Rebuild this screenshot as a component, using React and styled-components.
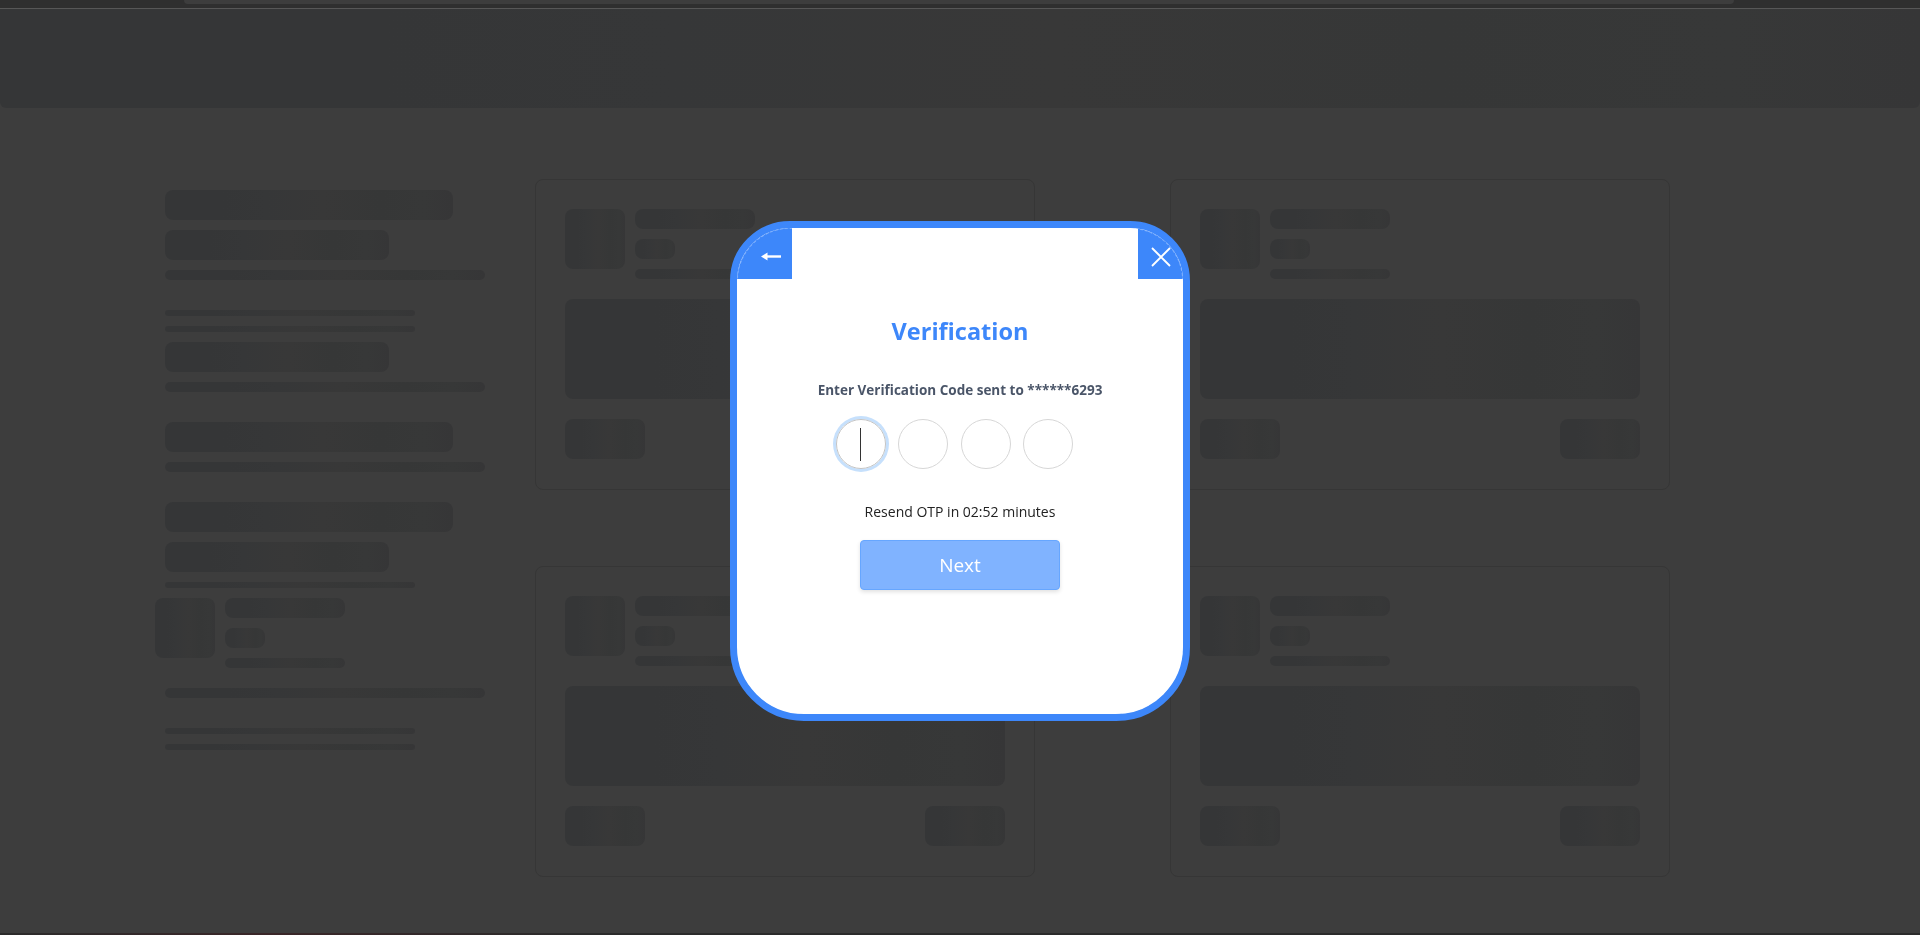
import styled, { createGlobalStyle, css } from "styled-components";

const GlobalStyle = createGlobalStyle`
  * {
    box-sizing: border-box;
  }
  html,
  body {
    margin: 0;
    padding: 0;
    background: #3d3d3d;
    overflow: hidden;
  }
  body {
    font-family: "Open Sans", "Noto Sans", sans-serif;
  }
`;

const shimmer = css`
  background: linear-gradient(
    90deg,
    #353637 0%,
    #353637 20%,
    #363738 35%,
    #383838 55%,
    #363737 75%,
    #373838 90%,
    #363637 100%
  );
`;

const Page = styled.div`
  height: 100vh;
  display: flex;
  flex-direction: column;
  background: #3d3d3d;
`;

const TopStrip = styled.div`
  height: 8px;
  background: #2f2f2f;
  padding: 0 186px 0 184px;
  border-bottom: 1px solid #575757;
  box-sizing: content-box;
`;

const Tab = styled.div`
  height: 4px;
  background: #3d3d3d;
  border-radius: 0 0 5px 5px;
`;

const Header = styled.div`
  height: 99px;
  border-radius: 0 0 6px 6px;
  ${shimmer};
`;

const Main = styled.div`
  flex: 1;
  display: flex;
  align-items: flex-start;
  padding: 71px 0 0 165px;
`;

const LeftColumn = styled.div`
  width: 320px;
  margin-right: 50px;
  padding-top: 11px;
  display: flex;
  flex-direction: column;
  gap: 10px;
`;

const Bar = styled.div`
  width: ${(p) => p.$w}px;
  height: ${(p) => p.$h}px;
  margin-top: ${(p) => p.$mt || 0}px;
  border-radius: ${(p) => (p.$h >= 20 ? 8 : p.$h >= 10 ? 5 : 3)}px;
  flex-shrink: 0;
  ${shimmer};
`;

const MediaRow = styled.div`
  display: flex;
  align-items: flex-start;
  gap: 10px;
  margin-left: ${(p) => p.$ml || 0}px;
`;

const Thumb = styled.div`
  width: 60px;
  height: 60px;
  border-radius: 8px;
  flex-shrink: 0;
  ${shimmer};
`;

const MediaLines = styled.div`
  display: flex;
  flex-direction: column;
  gap: 10px;
`;

const CardGrid = styled.div`
  display: grid;
  grid-template-columns: 500px 500px;
  column-gap: 135px;
  row-gap: 76px;
`;

const Card = styled.div`
  height: 311px;
  border: 1px solid #363636;
  border-radius: 8px;
  padding: 29px;
  display: flex;
  flex-direction: column;
`;

const Banner = styled.div`
  height: 100px;
  margin-top: 20px;
  border-radius: 8px;
  ${shimmer};
`;

const CardFooter = styled.div`
  display: flex;
  justify-content: space-between;
  margin-top: 20px;
`;

const Pill = styled.div`
  width: 80px;
  height: 40px;
  border-radius: 8px;
  ${shimmer};
`;

const BottomLine = styled.div`
  height: 2px;
  background: linear-gradient(90deg, #2b2b2b 0%, #3a2628 14%, #2b2b2b 30%, #2b2b2b 100%);
`;

/* ---------- modal ---------- */

const Overlay = styled.div`
  position: fixed;
  inset: 0;
  display: flex;
  align-items: center;
  justify-content: center;
  padding-top: 7px;
`;

const Modal = styled.div`
  position: relative;
  width: 460px;
  height: 500px;
  background: #ffffff;
  border: 7px solid #3d87fa;
  border-radius: 60px 60px 74px 74px;
  overflow: hidden;
  display: flex;
  flex-direction: column;

  &::after {
    content: "";
    position: absolute;
    inset: 0;
    border-radius: 53px 53px 67px 67px;
    border: 1px dashed rgba(255, 255, 255, 0.3);
    pointer-events: none;
  }
`;

const HeaderBar = styled.div`
  display: flex;
  justify-content: space-between;
  height: 51px;
`;

const CornerButton = styled.button`
  width: ${(p) => p.$w}px;
  height: 51px;
  border: 0;
  margin: 0;
  background: #3d87fa;
  padding: ${(p) => p.$pt}px 0 0 ${(p) => p.$pl}px;
  display: flex;
  align-items: flex-start;
  justify-content: flex-start;
  cursor: pointer;
`;

const Body = styled.div`
  display: flex;
  flex-direction: column;
  align-items: center;
`;

const Title = styled.h2`
  margin: 37px 0 0;
  font-size: 23.5px;
  line-height: 30px;
  font-weight: 700;
  color: #3d87fa;
`;

const Subtitle = styled.p`
  margin: 34px 0 0;
  font-size: 13.5px;
  line-height: 20px;
  font-weight: 700;
  color: #4a5568;
`;

const OtpRow = styled.div`
  display: flex;
  margin-top: 19px;
  padding-left: 1px;
`;

const OtpCircle = styled.div`
  width: 50px;
  height: 50px;
  margin-right: 12.5px;
  border-radius: 50%;
  border: 1px solid ${(p) => (p.$active ? "#c4c4c4" : "#d7d7d7")};
  box-shadow: ${(p) => (p.$active ? "0 0 0 3px #c6e0fc" : "none")};
  display: flex;
  align-items: center;
  justify-content: center;
`;

const Caret = styled.span`
  width: 1px;
  height: 33px;
  background: #333333;
`;

const Resend = styled.p`
  margin: 33px 0 0;
  font-size: 14px;
  line-height: 20px;
  color: #222222;
`;

const NextButton = styled.button`
  margin-top: 18px;
  width: 200px;
  height: 50px;
  border-radius: 4px;
  border: 1px solid #66a6ff;
  background: #80b3ff;
  color: #ffffff;
  font-family: "Open Sans", "Noto Sans", sans-serif;
  font-size: 19px;
  box-shadow: 0 2px 4px rgba(0, 0, 0, 0.12);
  cursor: pointer;
`;

function BackArrow() {
  return (
    <svg width="20" height="9" viewBox="0 0 20 9">
      <polygon points="0,4.5 6.5,0.5 6.5,8.5" fill="#fff" />
      <rect x="5" y="3.3" width="15" height="2.4" fill="#fff" />
    </svg>
  );
}

function CloseIcon() {
  return (
    <svg width="20" height="20" viewBox="0 0 20 20">
      <path d="M1 1 L19 19 M19 1 L1 19" stroke="#fff" strokeWidth="1.8" />
    </svg>
  );
}

function SkeletonCard() {
  return (
    <Card>
      <MediaRow>
        <Thumb />
        <MediaLines>
          <Bar $w={120} $h={20} />
          <Bar $w={40} $h={20} />
          <Bar $w={120} $h={10} />
        </MediaLines>
      </MediaRow>
      <Banner />
      <CardFooter>
        <Pill />
        <Pill />
      </CardFooter>
    </Card>
  );
}

export default function App() {
  return (
    <>
      <GlobalStyle />
      <Page>
        <TopStrip>
          <Tab />
        </TopStrip>
        <Header />
        <Main>
          <LeftColumn>
            <Bar $w={288} $h={30} />
            <Bar $w={224} $h={30} />
            <Bar $w={320} $h={10} />
            <Bar $w={250} $h={6} $mt={20} />
            <Bar $w={250} $h={6} />
            <Bar $w={224} $h={30} />
            <Bar $w={320} $h={10} />
            <Bar $w={288} $h={30} $mt={20} />
            <Bar $w={320} $h={10} />
            <Bar $w={288} $h={30} $mt={20} />
            <Bar $w={224} $h={30} />
            <Bar $w={250} $h={6} />
            <MediaRow $ml={-10}>
              <Thumb />
              <MediaLines>
                <Bar $w={120} $h={20} />
                <Bar $w={40} $h={20} />
                <Bar $w={120} $h={10} />
              </MediaLines>
            </MediaRow>
            <Bar $w={320} $h={10} $mt={10} />
            <Bar $w={250} $h={6} $mt={20} />
            <Bar $w={250} $h={6} />
          </LeftColumn>
          <CardGrid>
            <SkeletonCard />
            <SkeletonCard />
            <SkeletonCard />
            <SkeletonCard />
          </CardGrid>
        </Main>
        <BottomLine />
      </Page>

      <Overlay>
        <Modal>
          <HeaderBar>
            <CornerButton $w={55} $pt={24} $pl={24} aria-label="Back">
              <BackArrow />
            </CornerButton>
            <CornerButton $w={45} $pt={19} $pl={13} aria-label="Close">
              <CloseIcon />
            </CornerButton>
          </HeaderBar>
          <Body>
            <Title>Verification</Title>
            <Subtitle>Enter Verification Code sent to ******6293</Subtitle>
            <OtpRow>
              <OtpCircle $active>
                <Caret />
              </OtpCircle>
              <OtpCircle />
              <OtpCircle />
              <OtpCircle />
            </OtpRow>
            <Resend>Resend OTP in 02:52 minutes</Resend>
            <NextButton>Next</NextButton>
          </Body>
        </Modal>
      </Overlay>
    </>
  );
}
